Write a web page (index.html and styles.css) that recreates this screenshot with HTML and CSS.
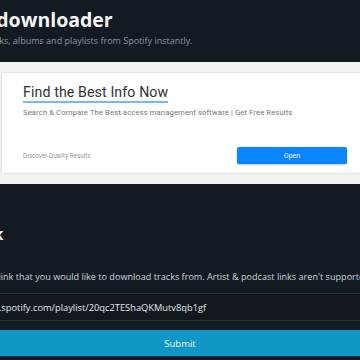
FILE: index.html
```html
<!DOCTYPE html>
<html lang="en">
<head>
    <meta charset="UTF-8">
    <meta name="viewport" content="width=device-width, initial-scale=1.0">
    <title>Spotify downloader</title>
    <link rel="stylesheet" href="styles.css">
</head>
<body>
    <div class="page">
        <header class="header">
            <h1>Spotify downloader</h1>
            <p class="lead">Download tracks, albums and playlists from Spotify instantly.</p>
        </header>

        <div class="ad">
            <div class="ad-card">
                <div class="ad-title">Find the Best Info Now</div>
                <div class="ad-text">Search &amp; Compare The Best access management software | Get Free Results</div>
                <div class="ad-foot">
                    <span class="ad-source">Discover Quality Results</span>
                    <button class="ad-open">Open</button>
                </div>
            </div>
        </div>

        <section class="form">
            <h2>Paste link</h2>
            <p class="hint">Paste the Spotify link that you would like to download tracks from. Artist &amp; podcast links aren't supported.</p>
            <input type="text" class="link-input" value="https://open.spotify.com/playlist/20qc2TEShaQKMutv8qb1gf">
            <button class="submit">Submit</button>
        </section>
    </div>
</body>
</html>
```

FILE: styles.css
```css
body {
    margin: 0;
    padding: 0;
    background: #131a21;
    color: #f3f5f7;
    font-family: 'Open Sans', 'Noto Sans', Arial, sans-serif;
    overflow: hidden;
}

/* the page is scrolled sideways, so the left part is off screen */
.page {
    width: 510px;
    margin-left: -75px;
}

.header {
    padding-top: 5px;
}

h1 {
    margin: 0 0 0 -2px;
    font-size: 19.5px;
    font-weight: 700;
    line-height: 30px;
    color: #f5f7f9;
}

.lead {
    margin: 0 0 0 13px;
    font-size: 9px;
    line-height: 12px;
    color: #8d98a3;
}

.ad {
    width: 362px;
    margin: 15px 0 0 75px;
    background: #f2f2f2;
    padding: 11px 0 11px 2px;
}

.ad-card {
    background: #fff;
    padding: 7px 15px 9px 21px;
    box-shadow: 0 0 2px rgba(0, 0, 0, 0.15);
}

.ad-title {
    display: inline-block;
    font-family: Roboto, Arial, sans-serif;
    font-size: 14.2px;
    line-height: 18px;
    color: #333;
    border-bottom: 2px solid #74b9f7;
    letter-spacing: 0.1px;
}

.ad-text {
    margin-top: 5px;
    font-family: Roboto, Arial, sans-serif;
    font-size: 7.7px;
    line-height: 10px;
    color: #777;
    letter-spacing: 0.1px;
}

.ad-foot {
    margin-top: 29px;
    display: flex;
    justify-content: space-between;
    align-items: center;
}

.ad-source {
    font-family: Roboto, Arial, sans-serif;
    font-size: 6.3px;
    color: #9a9a9a;
}

.ad-open {
    width: 110px;
    height: 17px;
    margin-right: 2px;
    border: none;
    border-radius: 2px;
    background: #0b85ff;
    color: #fff;
    font-family: Roboto, Arial, sans-serif;
    font-size: 7px;
    box-shadow: 0 1px 2px rgba(0, 0, 0, 0.25);
}

.form {
    margin-top: 39px;
}

h2 {
    margin: 0;
    font-size: 16px;
    font-weight: 700;
    line-height: 22px;
    color: #f3f5f7;
}

.hint {
    margin: 25px 0 0;
    font-size: 9.1px;
    line-height: 14px;
    color: #cdd4da;
    white-space: nowrap;
}

.link-input {
    display: block;
    box-sizing: border-box;
    width: 100%;
    height: 28px;
    margin-top: 9px;
    padding: 0 10px 0 20px;
    background: #12181e;
    border: none;
    border-top: 1px solid #1f3a26;
    border-bottom: 1px solid #1f3a26;
    color: #e2e8ec;
    font-family: 'Open Sans', 'Noto Sans', Arial, sans-serif;
    font-size: 9.3px;
    outline: none;
}

.submit {
    display: block;
    width: 100%;
    height: 27px;
    margin-top: 9px;
    border: none;
    border-bottom: 1px solid #0a3b52;
    background: #1197c6;
    color: #f2f8fb;
    font-family: 'Open Sans', 'Noto Sans', Arial, sans-serif;
    font-size: 9.5px;
}
```
